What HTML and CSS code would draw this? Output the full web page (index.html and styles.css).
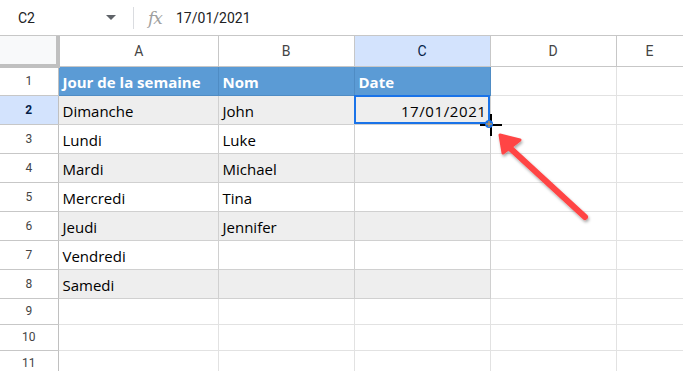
FILE: index.html
```html
<!DOCTYPE html>
<html lang="fr">
<head>
  <meta charset="UTF-8">
  <title>Feuille</title>
  <link rel="stylesheet" href="styles.css">
</head>
<body>
  <!-- Formula bar -->
  <div class="formula-bar">
    <div class="name-box">C2</div>
    <div class="caret"></div>
    <div class="sep"></div>
    <div class="fx">fx</div>
    <div class="formula">17/01/2021</div>
  </div>

  <!-- Grid -->
  <table class="grid">
    <colgroup>
      <col class="c-row"><col class="c-a"><col class="c-b"><col class="c-c"><col class="c-d"><col class="c-e">
    </colgroup>
    <tr class="col-head">
      <th class="corner"></th><th>A</th><th>B</th><th class="sel">C</th><th>D</th><th>E</th>
    </tr>
    <tr class="r tall head-row">
      <th>1</th><td>Jour de la semaine</td><td>Nom</td><td>Date</td><td class="out"></td><td class="out"></td>
    </tr>
    <tr class="r tall band">
      <th class="sel">2</th><td>Dimanche</td><td>John</td><td class="num active">17/01/2021</td><td class="out"></td><td class="out"></td>
    </tr>
    <tr class="r tall">
      <th>3</th><td>Lundi</td><td>Luke</td><td></td><td class="out"></td><td class="out"></td>
    </tr>
    <tr class="r tall band">
      <th>4</th><td>Mardi</td><td>Michael</td><td></td><td class="out"></td><td class="out"></td>
    </tr>
    <tr class="r tall">
      <th>5</th><td>Mercredi</td><td>Tina</td><td></td><td class="out"></td><td class="out"></td>
    </tr>
    <tr class="r tall band">
      <th>6</th><td>Jeudi</td><td>Jennifer</td><td></td><td class="out"></td><td class="out"></td>
    </tr>
    <tr class="r tall">
      <th>7</th><td>Vendredi</td><td></td><td></td><td class="out"></td><td class="out"></td>
    </tr>
    <tr class="r tall band">
      <th>8</th><td>Samedi</td><td></td><td></td><td class="out"></td><td class="out"></td>
    </tr>
    <tr class="r short"><th>9</th><td></td><td></td><td></td><td></td><td></td></tr>
    <tr class="r short"><th>10</th><td></td><td></td><td></td><td></td><td></td></tr>
    <tr class="r short"><th>11</th><td></td><td></td><td></td><td></td><td></td></tr>
  </table>

  <!-- fill handle cursor -->
  <svg class="cursor" width="24" height="24" viewBox="0 0 24 24">
    <rect x="11" y="1" width="2" height="22" fill="#000"/>
    <rect x="1" y="11" width="22" height="2" fill="#000"/>
    <circle cx="10" cy="11" r="4" fill="#1a73e8"/>
    <rect x="9.5" y="8" width="1" height="6" fill="#f0a030"/>
    <rect x="7" y="10.5" width="6" height="1" fill="#f0a030"/>
  </svg>

  <!-- red arrow -->
  <svg class="arrow" width="110" height="100" viewBox="0 0 110 100">
    <defs>
      <filter id="sh" x="-20%" y="-20%" width="140%" height="140%">
        <feDropShadow dx="1" dy="2" stdDeviation="1.5" flood-color="#000" flood-opacity="0.35"/>
      </filter>
    </defs>
    <g filter="url(#sh)">
      <line x1="93" y1="89" x2="18" y2="20" stroke="#ff4545" stroke-width="6" stroke-linecap="round"/>
      <polygon points="8,7 28,12 11,25" fill="#ff4545" stroke="#ff4545" stroke-width="3" stroke-linejoin="round"/>
    </g>
  </svg>
</body>
</html>
```

FILE: styles.css
```css
* { margin: 0; padding: 0; box-sizing: border-box; }
body {
  background: #fff;
  font-family: "Open Sans", sans-serif;
  color: #000;
  overflow: hidden;
  width: 683px;
  height: 371px;
  position: relative;
}

/* ---------- formula bar ---------- */
.formula-bar {
  height: 36px;
  display: flex;
  align-items: center;
  border-bottom: 1px solid #c7c7c7;
  font-family: Roboto, sans-serif;
  font-size: 14px;
  color: #202124;
}
.name-box { width: 106px; padding-left: 18px; }
.caret {
  width: 0; height: 0;
  border-left: 5px solid transparent;
  border-right: 5px solid transparent;
  border-top: 5px solid #5f6368;
}
.sep { width: 1px; height: 22px; background: #dadce0; margin: 0 14px 0 17px; }
.fx {
  font-family: "DejaVu Serif", serif;
  font-style: italic;
  font-size: 17px;
  color: #a0a0a0;
  width: 28px;
  letter-spacing: -1px;
}

/* ---------- grid ---------- */
.grid {
  border-collapse: collapse;
  table-layout: fixed;
  width: 683px;
}
.c-row { width: 58px; }
.c-a { width: 160px; }
.c-b { width: 136px; }
.c-c { width: 136px; }
.c-d { width: 126px; }
.c-e { width: 67px; }

.grid td, .grid th {
  border: 1px solid #e2e2e2;
  white-space: nowrap;
  overflow: hidden;
}
.grid th {
  font-family: Roboto, sans-serif;
  font-weight: normal;
  color: #444;
  border-color: #c7c7c7;
}
.col-head th {
  height: 30px;
  font-size: 14px;
  border-top: none;
}
.col-head th.corner {
  background: #f8f9fa;
  border-right: 4px solid #c0c0c0;
  border-bottom: 4px solid #c0c0c0;
  border-left: none;
}
.r th {
  font-size: 12px;
  border-left: none;
  border-right: 1px solid #c0c0c0;
}
.grid th.sel {
  background: #d3e3fd;
  color: #041e49;
  font-weight: bold;
}
.col-head th.sel { font-weight: normal; }

.tall td, .tall th { height: 29px; }
.short td, .short th { height: 26px; }

.grid td {
  font-size: 15px;
  padding: 2px 3px 0 4px;
  color: #000;
}
.tall td { border-color: #d0d0d0; }
.tall td.out { border-color: #e2e2e2; }
.band td { background: #eeeeee; }
.band td.out { background: #fff; }

.head-row td {
  background: #5b9bd5;
  color: #fff;
  font-weight: bold;
  border-color: #4f8cc4;
}
.head-row td.out { background: #fff; border-color: #e2e2e2; }

td.num { text-align: right; letter-spacing: 0.6px; }
td.active {
  outline: 2px solid #1a73e8;
  outline-offset: -2px;
}

/* ---------- overlays ---------- */
.cursor {
  position: absolute;
  left: 479px;
  top: 113px;
}
.arrow {
  position: absolute;
  left: 492px;
  top: 128px;
}
```
